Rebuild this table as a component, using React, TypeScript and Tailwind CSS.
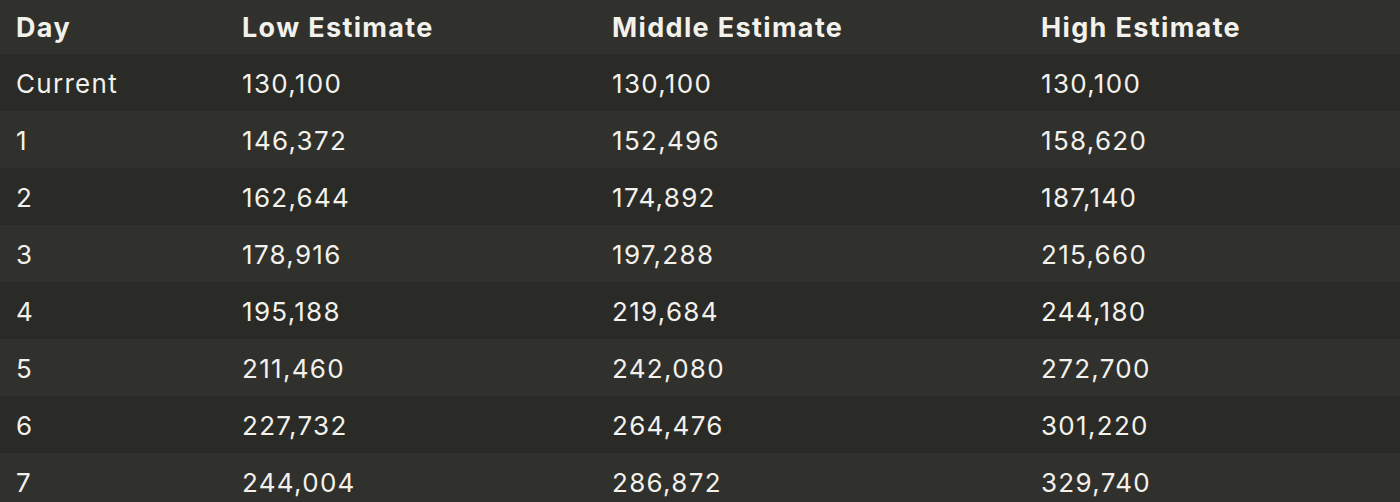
const rows = [
  ['Current', '130,100', '130,100', '130,100'],
  ['1', '146,372', '152,496', '158,620'],
  ['2', '162,644', '174,892', '187,140'],
  ['3', '178,916', '197,288', '215,660'],
  ['4', '195,188', '219,684', '244,180'],
  ['5', '211,460', '242,080', '272,700'],
  ['6', '227,732', '264,476', '301,220'],
  ['7', '244,004', '286,872', '329,740'],
];

export default function App() {
  return (
    <div className="w-[1400px] h-[502px] overflow-hidden bg-[#2a2a27] text-[#f3f1eb] font-['Inter',sans-serif]">
      <table className="w-full table-fixed border-collapse text-left">
        <colgroup>
          <col className="w-[242px]" />
          <col className="w-[370px]" />
          <col className="w-[429px]" />
          <col />
        </colgroup>
        <thead>
          <tr className="h-[54px] bg-[#30302c] text-[27px] tracking-[0.05em]">
            <th className="pl-4 pt-0.5 font-bold">Day</th>
            <th className="pt-0.5 font-bold">Low Estimate</th>
            <th className="pt-0.5 font-bold">Middle Estimate</th>
            <th className="pt-0.5 font-bold">High Estimate</th>
          </tr>
        </thead>
        <tbody>
          {rows.map((r, i) => (
            <tr
              key={r[0]}
              className={`h-[57px] text-[26px] tracking-[0.05em] ${i % 2 === 0 ? 'bg-[#2a2a27]' : 'bg-[#30302c]'}`}
            >
              <td className="pl-4 pt-0.5">{r[0]}</td>
              <td className="pt-0.5">{r[1]}</td>
              <td className="pt-0.5">{r[2]}</td>
              <td className="pt-0.5">{r[3]}</td>
            </tr>
          ))}
        </tbody>
      </table>
    </div>
  );
}
